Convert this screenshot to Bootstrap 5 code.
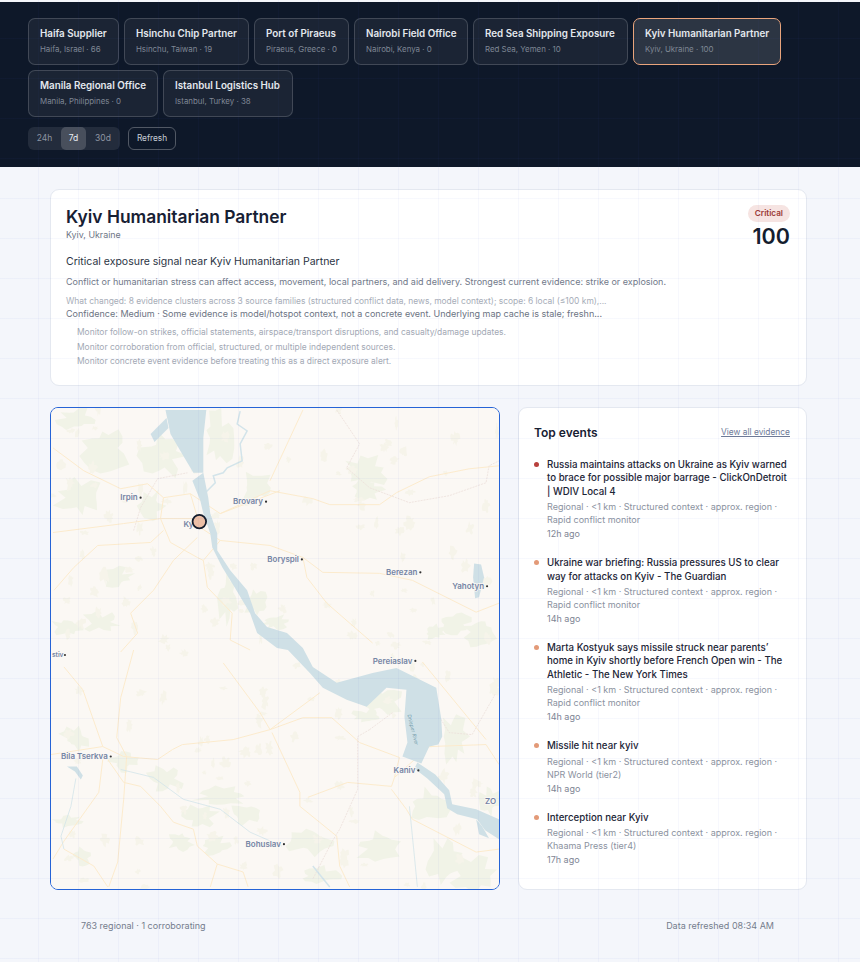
<!DOCTYPE html>
<html lang="en">
<head>
  <meta charset="UTF-8" />
  <meta name="viewport" content="width=device-width, initial-scale=1.0"/>
  <title>Exposure monitor</title>
  <link href="https://cdn.jsdelivr.net/npm/bootstrap@5.3.0/dist/css/bootstrap.min.css" rel="stylesheet" />
  <style>
    body { font-family: Inter, "Liberation Sans", sans-serif; background: #f4f6fb; padding-top: 2px; min-height: 962px; color: #172033; }
    body::after { content: ""; position: fixed; inset: 0; pointer-events: none; z-index: 5;
      background-image: linear-gradient(rgba(70,100,210,.045) 1px, transparent 1px), linear-gradient(90deg, rgba(70,100,210,.045) 1px, transparent 1px);
      background-size: 40px 40px; background-position: -2px -2px; }
    .top-band { background: #0e1829; height: 165px; padding: 16px 28px 0; }
    .chip-row { gap: 5px; margin-bottom: 5px; }
    .site-chip { height: 47px; padding: 7px 11px 0; text-align: left; border: 1px solid rgba(255,255,255,.17); border-radius: 7px; background: rgba(255,255,255,.055); color: #e4e8ee; }
    .site-chip.is-on { border-color: #e9a47c; background: rgba(255,255,255,.125); }
    .chip-name { font-size: 9.8px; font-weight: 600; line-height: 15px; white-space: nowrap; }
    .chip-sub { font-size: 7.9px; line-height: 12px; margin-top: 2px; color: #7f8794; white-space: nowrap; }
    .range-row { margin-top: 10px; gap: 8px; }
    .range-box { background: rgba(255,255,255,.09); border-radius: 6px; padding: 0; height: 23px; }
    .range-btn { width: 25px; height: 23px; line-height: 23px; padding: 0; text-align: center; font-size: 8.5px; color: #8e95a2; border-radius: 5px; }
    .range-btn.is-on { background: rgba(255,255,255,.17); color: #e9edf3; }
    .refresh-btn { height: 23px; width: 48px; padding: 0; line-height: 21px; font-size: 8.3px; color: #c9ced7; border: 1px solid rgba(255,255,255,.28); border-radius: 6px; background: transparent; text-align: center; }
    .page-body { padding: 22px 53px 0 50px; }
    .panel { border: 1px solid #e4e8f0; border-radius: 9px; background: #fff; box-shadow: none; }
    .summary-panel { height: 197px; padding: 15px 16px 15px 15px; }
    .summary-head { height: 44px; }
    .site-title { font-size: 17.4px; font-weight: 600; line-height: 24px; margin: 0; color: #172033; }
    .site-place { font-size: 8.9px; line-height: 11px; color: #6d7585; margin-top: 0; }
    .badge-crit { background: #f6e4e2; color: #9a3b36; font-size: 8.2px; font-weight: 600; line-height: 17px; height: 17px; padding: 0 7px; border-radius: 9px; }
    .score-num { font-size: 21.5px; font-weight: 600; line-height: 26px; color: #141d2e; margin-top: 1px; }
    .signal-line { font-size: 10.5px; line-height: 14px; color: #2b3444; margin-top: 6px; }
    .why-line { font-size: 9px; line-height: 12px; color: #717989; margin-top: 7px; }
    .changed-line { font-size: 8.43px; line-height: 12px; color: #a7adb8; margin-top: 7px; }
    .conf-line { font-size: 9px; line-height: 12px; color: #6b7383; margin-top: 1px; }
    .watch-list { margin: 5px 0 0; padding: 0 0 0 11px; list-style: none; }
    .watch-list li { font-size: 8.44px; line-height: 14.5px; color: #a3a9b5; }
    .split-row { gap: 18px; margin-top: 21px; }
    .map-box { width: 450px; height: 483px; flex: none; border: 1px solid #2563d6; border-left-width: 1.5px; border-right-width: 1.5px; border-radius: 8px; overflow: hidden; background: #fbf8f4; }
    .map-box svg { display: block; width: 100%; height: 100%; }
    .events-panel { width: 289px; height: 483px; flex: none; padding: 17px 16px 0 15px; }
    .events-head { margin-bottom: 18px; }
    .events-title { font-size: 12px; font-weight: 600; line-height: 15px; color: #172033; }
    .evidence-link { font-size: 8.4px; color: #6d7a98; }
    .event-item { display: flex; margin-bottom: 16px; }
    .event-dot { width: 5px; height: 5px; border-radius: 50%; flex: none; margin: 4px 8px 0 0; background: #e39a78; }
    .event-dot.is-red { background: #b8403c; }
    .event-head { font-size: 9.7px; font-weight: 500; line-height: 13.4px; color: #1c2536; }
    .event-meta { font-size: 9px; line-height: 13px; color: #8b92a0; margin-top: 2px; }
    .event-age { font-size: 9px; line-height: 13px; color: #7e8594; margin-top: 1px; }
    .foot-line { padding: 30px 33px 0 31px; font-size: 9px; line-height: 12px; color: #757d8d; }
    .place-lbl { font-family: Inter, "Liberation Sans", sans-serif; font-size: 8px; font-weight: 600; fill: #7585a4; stroke: #fbf8f4; stroke-width: 1.6px; paint-order: stroke; }
    .place-edge { font-size: 6.6px; }
    .water-lbl { font-family: Inter, "Liberation Sans", sans-serif; font-size: 5px; font-style: italic; fill: #6e98a8; }
  </style>
</head>
<body>

<header class="top-band">
  <div id="chipRows"></div>
  <div class="d-flex range-row">
    <div class="d-flex range-box">
      <div class="range-btn" style="width:33px">24h</div>
      <div class="range-btn is-on">7d</div>
      <div class="range-btn" style="width:34px">30d</div>
    </div>
    <button class="refresh-btn" type="button">Refresh</button>
  </div>
</header>

<main class="page-body">
  <section class="card panel summary-panel d-block">
    <div class="d-flex justify-content-between summary-head">
      <div>
        <h1 class="site-title">Kyiv Humanitarian Partner</h1>
        <div class="site-place">Kyiv, Ukraine</div>
      </div>
      <div class="d-flex flex-column align-items-end">
        <span class="badge-crit">Critical</span>
        <div class="score-num">100</div>
      </div>
    </div>
    <div class="signal-line">Critical exposure signal near Kyiv Humanitarian Partner</div>
    <div class="why-line">Conflict or humanitarian stress can affect access, movement, local partners, and aid delivery. Strongest current evidence: strike or explosion.</div>
    <div class="changed-line">What changed: 8 evidence clusters across 3 source families (structured conflict data, news, model context); scope: 6 local (≤100 km),...</div>
    <div class="conf-line">Confidence: Medium · Some evidence is model/hotspot context, not a concrete event. Underlying map cache is stale; freshn...</div>
    <ul class="watch-list">
      <li>Monitor follow-on strikes, official statements, airspace/transport disruptions, and casualty/damage updates.</li>
      <li>Monitor corroboration from official, structured, or multiple independent sources.</li>
      <li>Monitor concrete event evidence before treating this as a direct exposure alert.</li>
    </ul>
  </section>

  <div class="d-flex split-row">
    <div class="map-box">
      <svg id="mapSvg" viewBox="0 0 450 483" xmlns="http://www.w3.org/2000/svg">
        <rect width="450" height="483" fill="#fbf8f4"/>
        <g id="forestLayer"></g>
        <g fill="none" stroke="#fcebcd" stroke-width="1" stroke-linejoin="round">
          <path d="M2 40L33 63 70 81 97 76 113 90 140 86 170 106 230 83"/>
          <path d="M2 125L73 116 110 111 147 111"/>
          <path d="M147 130L123 153 103 183 80 206 87 226 70 245"/>
          <path d="M113 123L100 135 47 138 23 160 3 183"/>
          <path d="M170 133L220 138 253 150 273 165 330 166 363 173 427 205 450 196"/>
          <path d="M170 106L220 83 263 91 280 97 330 97 347 85 380 69 420 61 450 58"/>
          <path d="M253 2L220 73"/>
          <path d="M253 150L257 170 277 196 323 236"/>
          <path d="M153 153L157 180 182 206 180 233 200 243"/>
          <path d="M13 260L32 283 52 340 0 348"/>
          <path d="M52 340L73 350 107 353 122 343 132 338 183 333 220 323 270 286"/>
          <path d="M83 243L70 291 66 331 76 350 73 393 67 456 58 481"/>
          <path d="M52 353L48 386 13 435 2 453"/>
          <path d="M57 353L73 376 90 380 110 400 123 416 143 423 147 440 167 458 193 466 198 481"/>
          <path d="M13 443L43 460 57 481"/>
          <path d="M173 256L210 306 220 323 253 311 282 311 310 336 350 351 345 371"/>
          <path d="M222 326L250 386 250 400 287 430 290 460 300 481"/>
          <path d="M258 391L298 376 342 380 345 371 380 340 437 338 450 358"/>
          <path d="M342 383L357 403 363 413 427 446 450 443"/>
          <path d="M373 255L437 333"/>
          <path d="M167 458L160 481"/>
          <path d="M140 86L150 120 170 133M113 90L110 111 120 135 147 150 153 153 170 133"/>
        </g>
        <g fill="none" stroke="#ecdfdb" stroke-width=".8" stroke-dasharray="2 1">
          <path d="M83 123L90 100 107 71 137 65"/>
          <path d="M287 2L310 36 297 60 320 80 360 95 400 88 437 75 440 58 450 53"/>
          <path d="M320 323L308 330 308 383 290 423 282 436 263 473"/>
          <path d="M320 323L343 306"/>
          <path d="M390 310L400 326 423 328 447 286"/>
        </g>
        <g fill="none" stroke="#d3e4ea" stroke-width=".8">
          <path d="M190 3L187 16 197 23 190 36 192 53 177 60 173 65 163 68 165 75 155 85" stroke-width="1.5"/>
          <path d="M70 363L103 371 133 393 170 403 200 426 232 440"/>
          <path d="M263 460L280 481" stroke-width="1.5"/>
          <path d="M25 372L20 400 10 430 13 443"/>
          <path d="M360 400L365 450 368 481"/>
        </g>
        <g fill="#cfe0e6">
          <path d="M115 2H156L153 30 153 65 143 65 130 43 120 26 Z"/>
          <path d="M100 26L116 10 118 20 104 34 Z"/>
          <path d="M153 65L158 90 160 106 167 126 167 143 180 163 197 183 205 206 217 220 237 226 253 241 263 260 287 276 323 266 347 261 387 281 392 312 393 330 389 338 380 340 372 357 353 350 358 336 355 310 357 283 337 281 317 300 297 293 273 281 260 266 238 243 227 241 207 226 200 206 185 181 172 160 162 140 160 126 153 106 150 93 142 73 Z"/>
          <path d="M368 356L386 368 400 384 403 398 427 403 450 413V433L436 424 428 413 408 408 398 402 395 388 378 372 365 362 Z"/>
          <path d="M16 360H26L32 369 30 373 24 365 Z"/>
          <path d="M425 156L432 157 435 170 430 190 426 191 424 170 Z"/>
          <path d="M427 413L433 420 440 432 430 428 Z"/>
        </g>
        <text class="water-lbl" transform="translate(358 308) rotate(76)">Dnieper River</text>
        <g id="placeLayer"></g>
        <circle cx="149" cy="114" r="6.8" fill="#ecbfa6" stroke="#131c2c" stroke-width="1.8"/>
      </svg>
    </div>

    <section class="card panel events-panel d-block">
      <div class="d-flex justify-content-between align-items-center events-head">
        <div class="events-title">Top events</div>
        <a href="#" class="evidence-link">View all evidence</a>
      </div>
      <div id="eventList"></div>
    </section>
  </div>

  <div class="d-flex justify-content-between foot-line">
    <div>763 regional · 1 corroborating</div>
    <div>Data refreshed 08:34 AM</div>
  </div>
</main>

<script>
  const chipData = [
    [
      { name: "Haifa Supplier", sub: "Haifa, Israel · 66", w: 91 },
      { name: "Hsinchu Chip Partner", sub: "Hsinchu, Taiwan · 19", w: 125 },
      { name: "Port of Piraeus", sub: "Piraeus, Greece · 0", w: 95 },
      { name: "Nairobi Field Office", sub: "Nairobi, Kenya · 0", w: 114 },
      { name: "Red Sea Shipping Exposure", sub: "Red Sea, Yemen · 10", w: 155 },
      { name: "Kyiv Humanitarian Partner", sub: "Kyiv, Ukraine · 100", w: 148, on: true }
    ],
    [
      { name: "Manila Regional Office", sub: "Manila, Philippines · 0", w: 130 },
      { name: "Istanbul Logistics Hub", sub: "Istanbul, Turkey · 38", w: 130 }
    ]
  ];

  document.getElementById("chipRows").innerHTML = chipData.map(row =>
    `<div class="d-flex chip-row">` + row.map(c =>
      `<div class="site-chip${c.on ? " is-on" : ""}" style="width:${c.w}px">
        <div class="chip-name">${c.name}</div>
        <div class="chip-sub">${c.sub}</div>
      </div>`).join("") + `</div>`
  ).join("");

  const eventData = [
    { head: "Russia maintains attacks on Ukraine as Kyiv warned to brace for possible major barrage - ClickOnDetroit | WDIV Local 4", src: "Rapid conflict monitor", age: "12h ago", red: true },
    { head: "Ukraine war briefing: Russia pressures US to clear way for attacks on Kyiv - The Guardian", src: "Rapid conflict monitor", age: "14h ago" },
    { head: "Marta Kostyuk says missile struck near parents’ home in Kyiv shortly before French Open win - The Athletic - The New York Times", src: "Rapid conflict monitor", age: "14h ago" },
    { head: "Missile hit near kyiv", src: "NPR World (tier2)", age: "14h ago" },
    { head: "Interception near Kyiv", src: "Khaama Press (tier4)", age: "17h ago" }
  ];

  document.getElementById("eventList").innerHTML = eventData.map(e => `
    <div class="event-item">
      <span class="event-dot${e.red ? " is-red" : ""}"></span>
      <div>
        <div class="event-head">${e.head}</div>
        <div class="event-meta">Regional · &lt;1 km · Structured context · approx. region · ${e.src}</div>
        <div class="event-age">${e.age}</div>
      </div>
    </div>`).join("");

  // map places: dot position, label to the left of the dot
  const places = [
    ["Irpin", 90, 90], ["Brovary", 216, 94], ["Boryspil", 252, 152], ["Berezan", 371, 165],
    ["Yahotyn", 438, 179], ["Bila Tserkva", 60, 350], ["Bohuslav", 234, 438],
    ["Pereiaslav", 366, 254], ["Kaniv", 369, 364]
  ];
  let placeSvg = places.map(p =>
    `<circle cx="${p[1]}" cy="${p[2]}" r="1.1" fill="#333"/><text class="place-lbl" x="${p[1] - 3}" y="${p[2] + 2.8}" text-anchor="end">${p[0]}</text>`
  ).join("");
  placeSvg += `<circle cx="14" cy="248" r="1.1" fill="#333"/><text class="place-lbl place-edge" x="1" y="250.5">stiv</text>`;
  placeSvg += `<text class="place-lbl" x="133" y="119">Kyiv</text><text class="place-lbl" x="436" y="398">ZO</text>`;
  document.getElementById("placeLayer").innerHTML = placeSvg;

  // forest patches, jagged blobs from a fixed seed
  let seed = 41;
  function rnd() { seed = (seed * 16807) % 2147483647; return seed / 2147483647; }
  function blob(cx, cy, rx, ry, fill) {
    const n = 18;
    let pts = [];
    for (let i = 0; i < n; i++) {
      const a = i / n * Math.PI * 2, k = 0.45 + rnd() * 0.75;
      pts.push((cx + Math.cos(a) * rx * k).toFixed(1) + "," + (cy + Math.sin(a) * ry * k).toFixed(1));
    }
    return `<polygon fill="${fill}" points="${pts.join(" ")}"/>`;
  }
  const bigPatches = [
    [55,40,26,22],[25,12,20,12],[112,48,22,22],[168,30,16,28],[28,90,24,20],[205,80,18,18],[100,98,14,16],
    [178,190,10,30],[315,65,24,18],[318,82,16,10],[65,170,18,10],[50,215,20,10],[15,220,16,8],
    [25,332,16,12],[73,355,14,10],[115,372,18,14],[170,390,26,10],[150,410,18,12],[195,408,16,12],
    [130,435,14,10],[165,440,14,10],[15,415,16,6],[30,450,10,10],[335,295,20,14],[318,310,16,8],
    [405,330,14,28],[380,400,24,18],[330,440,26,16],[260,435,24,14],[270,470,24,10],[425,470,26,20],
    [395,455,18,22],[440,395,12,14],[405,215,16,12],[385,225,12,8],[430,225,16,16],[205,195,12,14],[225,215,16,8]
  ];
  let forestSvg = bigPatches.map(b => blob(b[0], b[1], b[2], b[3], "#f1f3e7")).join("");
  for (let i = 0; i < 170; i++) {
    forestSvg += blob(rnd() * 450, rnd() * 483, 2 + rnd() * 4, 2 + rnd() * 6, "#f6f4ea");
  }
  document.getElementById("forestLayer").innerHTML = forestSvg;
</script>

<script src="https://cdn.jsdelivr.net/npm/bootstrap@5.3.0/dist/js/bootstrap.bundle.min.js"></script>
</body>
</html>
